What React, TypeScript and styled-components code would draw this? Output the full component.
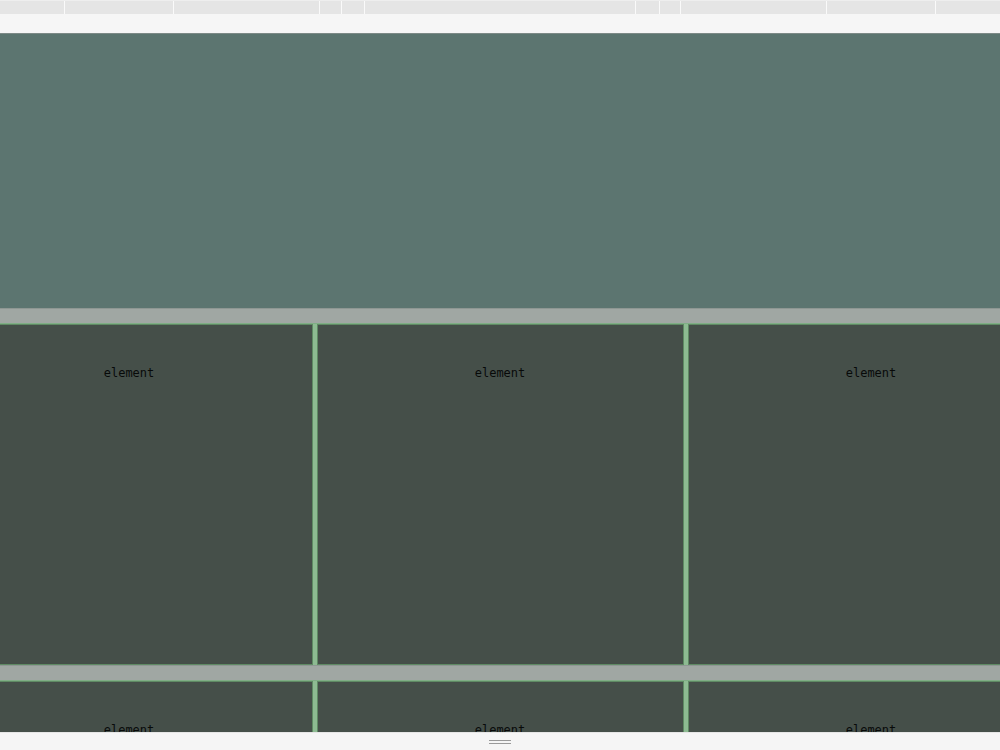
import { createGlobalStyle, styled } from "styled-components";

const GlobalStyle = createGlobalStyle`
  html, body {
    margin: 0;
    padding: 0;
    height: 100%;
    overflow: hidden;
    background: #f6f6f6;
  }
  #root {
    height: 100%;
  }
`;

const Page = styled.div`
  display: flex;
  flex-direction: column;
  height: 750px;
  width: 1000px;
  overflow: hidden;
`;

const Ruler = styled.div`
  display: flex;
  height: 14px;
  background: #e5e5e5;
  border-top: 1px solid #eeeeee;
  box-sizing: border-box;
`;

const RulerSegment = styled.div<{ $w: number }>`
  width: ${(p) => p.$w}px;
  flex: none;
  border-right: 1px solid #fafafa;
  box-sizing: border-box;
  &:last-child {
    border-right: none;
  }
`;

const Toolbar = styled.div`
  height: 19px;
  background: #f6f6f6;
  border-bottom: 1px solid #7d8a87;
`;

const Header = styled.div`
  height: 274px;
  background: #5c7570;
  flex: none;
`;

const Band = styled.div`
  height: 16px;
  flex: none;
  background: #a0a7a3;
  border-top: 1px solid #8e9793;
  border-bottom: 1px solid #7fae85;
  box-sizing: border-box;
`;

const Viewport = styled.div`
  flex: 1;
  display: flex;
  flex-direction: column;
  overflow: hidden;
  min-height: 0;
`;

const Row = styled.div<{ $h: number }>`
  display: flex;
  justify-content: center;
  gap: 4px;
  height: ${(p) => p.$h}px;
  flex: none;
  background: #8dbb92;
`;

const Cell = styled.div`
  width: 367px;
  flex: none;
  background: #454f49;
  box-shadow: inset 0 0 0 1px #5f8a64;
  display: flex;
  justify-content: center;
  padding-top: 42px;
  box-sizing: border-box;
  font-family: "DejaVu Sans Mono", "Liberation Mono", monospace;
  font-size: 12px;
  color: #080a09;
`;

const Footer = styled.div`
  height: 17px;
  flex: none;
  background: #f5f5f5;
  border-top: 1px solid #e6e6e6;
  display: flex;
  flex-direction: column;
  align-items: center;
  justify-content: center;
  gap: 2px;
`;

const HandleLine = styled.div`
  width: 22px;
  height: 1px;
  background: #9a9a9a;
`;

const segments = [65, 109, 146, 22, 23, 271, 24, 21, 146, 109, 64];

function CellRow({ height }: { height: number }) {
  return (
    <Row $h={height}>
      <Cell>element</Cell>
      <Cell>element</Cell>
      <Cell>element</Cell>
    </Row>
  );
}

export default function App() {
  return (
    <>
      <GlobalStyle />
      <Page>
        <Ruler>
          {segments.map((w, i) => (
            <RulerSegment key={i} $w={w} />
          ))}
        </Ruler>
        <Toolbar />
        <Viewport>
          <Header />
          <Band />
          <CellRow height={341} />
          <Band />
          <CellRow height={341} />
        </Viewport>
        <Footer>
          <HandleLine />
          <HandleLine />
        </Footer>
      </Page>
    </>
  );
}
